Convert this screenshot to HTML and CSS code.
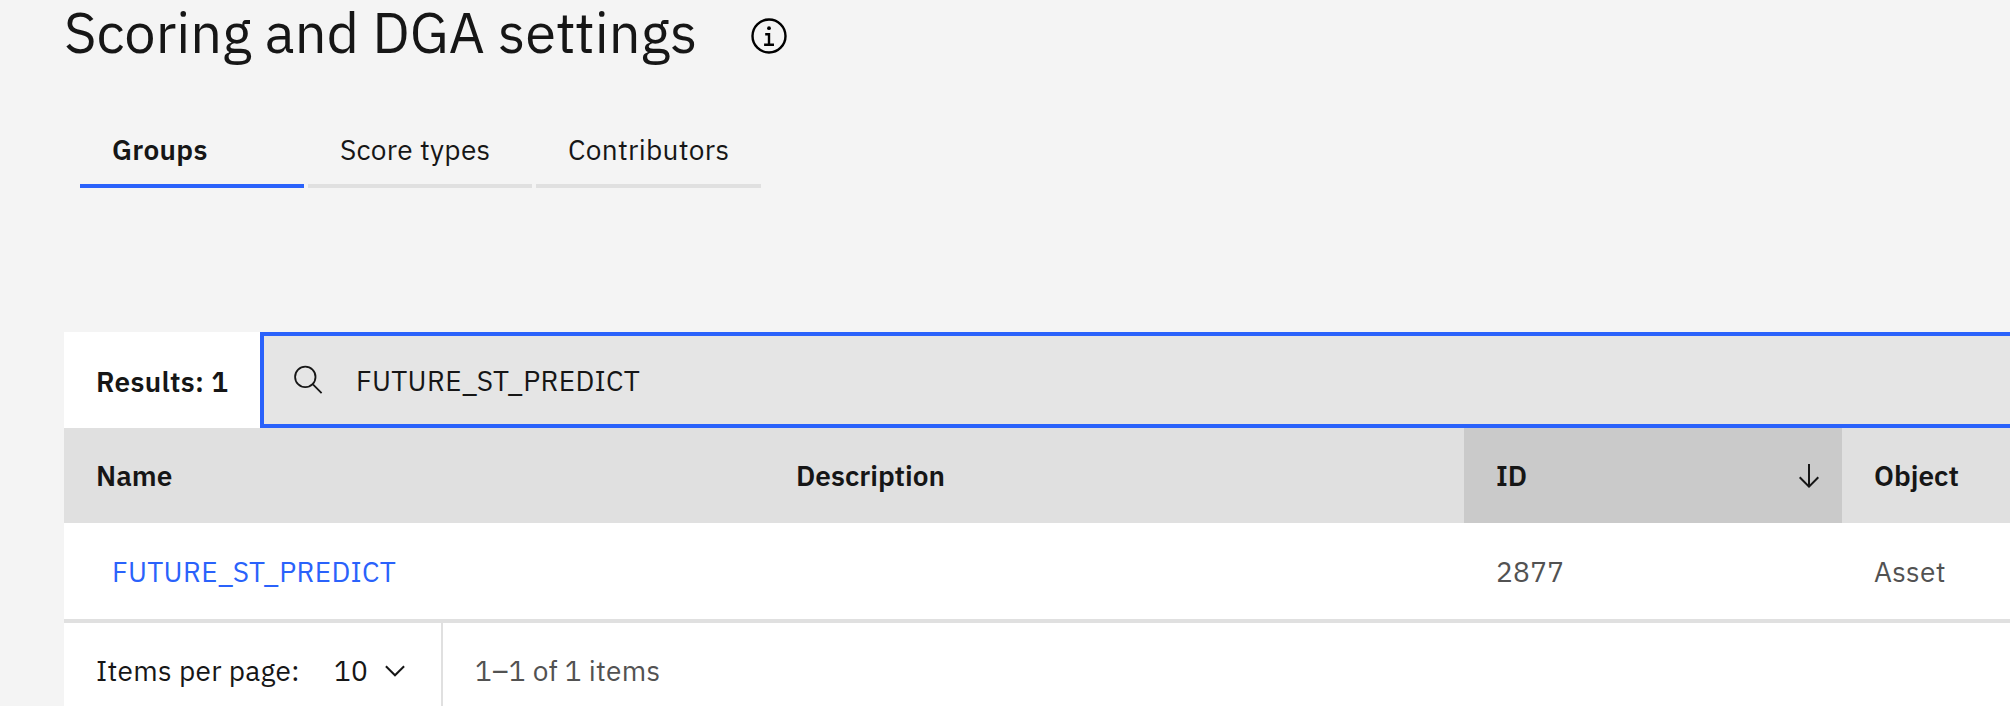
FILE: index.html
```
<!DOCTYPE html>
<html lang="en">
<head>
<meta charset="utf-8">
<title>Scoring and DGA settings</title>
<link rel="stylesheet" href="styles.css">
</head>
<body>
<header class="page-header">
  <h1 class="title">Scoring and DGA settings</h1>
  <svg class="info-icon" viewBox="0 0 40 40" aria-label="Information">
    <circle cx="20" cy="20" r="16.5" fill="none" stroke="currentColor" stroke-width="2.4"/>
    <circle cx="20" cy="12.2" r="1.9" fill="currentColor"/>
    <path d="M16.2 18.2H20V28.8M15.1 28.8H25" fill="none" stroke="currentColor" stroke-width="2.4"/>
  </svg>
</header>
<nav class="tabs">
  <a class="tab tab-active">Groups</a>
  <a class="tab">Score types</a>
  <a class="tab tab-last">Contributors</a>
</nav>
<main class="panel">
  <div class="toolbar">
    <div class="results">Results: 1</div>
    <div class="search">
      <svg class="search-icon" viewBox="0 0 32 32"><path d="M20.2 19.7 29.6 29.1M23.5 12.9a10.2 10.2 0 1 1-20.4 0 10.2 10.2 0 0 1 20.4 0Z" fill="none" stroke="currentColor" stroke-width="1.8"/></svg>
      <span>FUTURE_ST_PREDICT</span>
    </div>
  </div>
  <div class="row head">
    <div class="cell">Name</div>
    <div class="cell">Description</div>
    <div class="cell sorted">ID
      <svg class="arrow" viewBox="0 0 32 32" fill="currentColor"><path d="M24.59 16.59 17 24.17V4h-2v20.17l-7.59-7.58L6 18l10 10 10-10-1.41-1.41z"/></svg>
    </div>
    <div class="cell">Object</div>
  </div>
  <div class="row data">
    <div class="cell"><a class="link">FUTURE_ST_PREDICT</a></div>
    <div class="cell"></div>
    <div class="cell">2877</div>
    <div class="cell">Asset</div>
  </div>
  <footer class="pagination">
    <div class="page-size">
      <span class="size-label">Items per page:</span>
      <span class="size-value">10</span>
      <svg class="chevron" viewBox="0 0 20 12"><path d="M.9 1.2 10 10.3 19.1 1.2" fill="none" stroke="currentColor" stroke-width="2"/></svg>
    </div>
    <div class="range">1–1 of 1 items</div>
  </footer>
</main>
</body>
</html>
```
FILE: styles.css
```
* { box-sizing: border-box; }

body {
  margin: 0;
  height: 706px;
  overflow: hidden;
  background: #f4f4f4;
  color: #161616;
  font: 400 28px/36px "IBM Plex Sans", "Noto Sans", sans-serif;
  letter-spacing: 0.32px;
  white-space: nowrap;
}

.page-header {
  display: flex;
  height: 64px;
  padding-left: 64px;
}
.title {
  width: 685px;
  margin: 0;
  font: 400 56px/64px "IBM Plex Sans", "Open Sans", sans-serif;
  letter-spacing: 0;
}
.info-icon {
  width: 40px;
  height: 40px;
  margin-top: 16px;
  color: #000;
}

.tabs {
  display: flex;
  gap: 4px;
  margin: 48px 0 0 80px;
}
.tab {
  width: 224px;
  height: 76px;
  padding: 20px 0 0 32px;
  border-bottom: 4px solid #e0e0e0;
}
.tab-active { border-color: #2a62fb; font-weight: 600; }
.tab-last { width: 225px; }

.panel {
  margin: 144px 0 0 64px;
  background: #fff;
}

.toolbar { display: flex; height: 96px; }
.results {
  width: 196px;
  padding: 32px 0 0 32px;
  font-weight: 600;
}
.search {
  flex: 1;
  display: flex;
  align-items: center;
  padding-top: 1px;
  border: 4px solid #2a62fb;
  border-right: 0;
  background: #e5e5e5;
}
.search-icon {
  width: 32px;
  height: 32px;
  margin: 0 32px 2px 28px;
}

.row {
  display: grid;
  grid-template-columns: 700px 700px 378px 1fr;
}
.cell { display: flex; align-items: center; padding-left: 32px; }
.head {
  height: 95px;
  background: #e0e0e0;
  font-weight: 600;
  letter-spacing: 0;
}
.sorted { justify-content: space-between; padding-right: 17px; background: #cacaca; }
.arrow { width: 32px; height: 32px; }

.data {
  height: 100px;
  padding-top: 1px;
  border-bottom: 4px solid #e0e0e0;
  color: #525252;
}
.link { margin-left: 16px; color: #2a62fb; }

.pagination { display: flex; height: 95px; }
.page-size {
  display: flex;
  align-items: center;
  width: 379px;
  padding-left: 32px;
  border-right: 2px solid #e0e0e0;
}
.size-label { width: 238px; }
.size-value { width: 51px; }
.chevron { width: 20px; height: 12px; }
.range {
  padding: 30px 0 0 32px;
  color: #525252;
  letter-spacing: 0.28px;
}
```
